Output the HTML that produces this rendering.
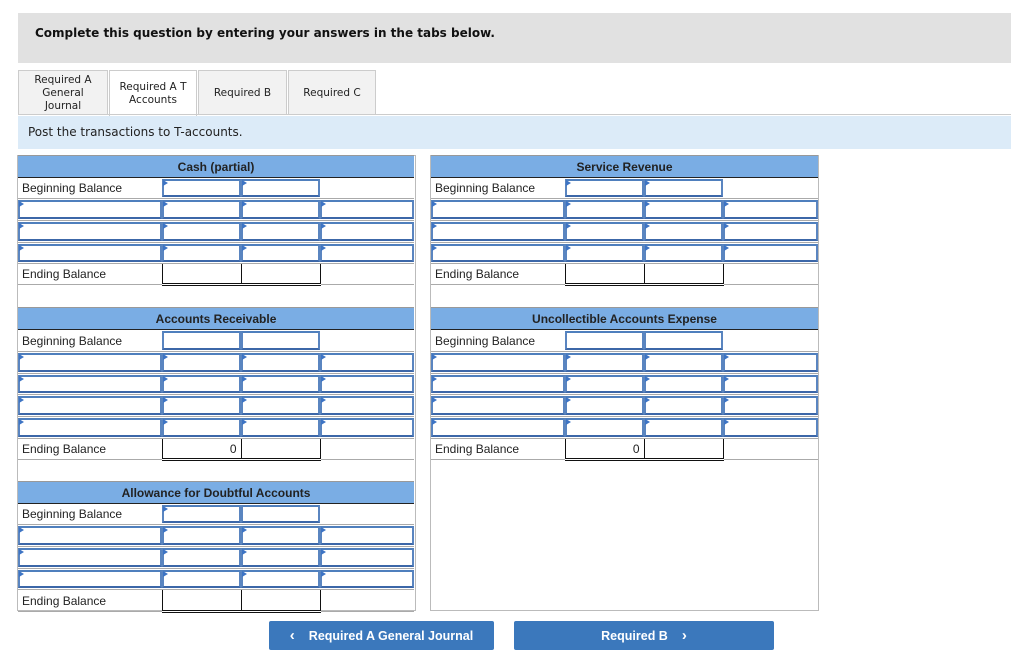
<!DOCTYPE html>
<html><head><meta charset="utf-8"><style>
*{box-sizing:border-box;margin:0;padding:0}
body{width:1024px;height:660px;background:#fff;position:relative;font-family:"Liberation Sans",Arial,sans-serif;overflow:hidden}
.top{position:absolute;left:18px;top:13px;width:993px;height:50px;background:#e1e1e1;font-family:"DejaVu Sans",sans-serif;font-weight:bold;font-size:12px;padding:13px 0 0 17px;color:#111}
.tab{position:absolute;top:70px;height:45px;border:1px solid #ccc;border-bottom:none;background:#f2f2f2;font-family:"DejaVu Sans",sans-serif;font-size:10.5px;color:#222;display:flex;align-items:center;justify-content:center;text-align:center;line-height:13px}
.tab.act{background:#fff;height:46px}
.line{position:absolute;left:18px;top:114px;width:993px;height:1px;background:#ccc}
.band{position:absolute;left:18px;top:116px;width:993px;height:33px;background:#dcebf8;font-family:"DejaVu Sans",sans-serif;font-size:12px;padding:9px 0 0 10px;color:#222}
.col{position:absolute;top:155px;height:456px;border:1px solid #bbb}
table{position:absolute;border-collapse:collapse;table-layout:fixed}
td{padding:0;position:relative;font-size:12px;color:#222;border-bottom:1px solid #aaa}
th{background:#7aade4;font-size:12px;font-weight:bold;color:#222;height:22px;border-bottom:1px solid #222;border-top:1px solid #999}
.i{position:absolute;left:0;top:1px;right:0;bottom:1px;border:2px solid #4f7fbd;border-color:#4f7fbd #5a85c0 #3c67a8 #5a85c0}
.i::before{content:"";position:absolute;left:-1px;top:-1px;border-left:5px solid #3d74c4;border-top:3px solid transparent;border-bottom:3px solid transparent}
.n::before{display:none}
td.l{padding-left:4px}
.e{border-left:1px solid #111;border-right:1px solid #111;border-bottom:3px double #111;text-align:right;padding-right:4px}
.btn{position:absolute;top:621px;height:29px;background:#3b78bc;color:#fff;font-weight:bold;font-size:12.5px;border-radius:2px;display:flex;align-items:center;justify-content:center}
</style></head><body>
<div class="top">Complete this question by entering your answers in the tabs below.</div>
<div class="tab" style="left:18px;width:90px">Required A<br>General<br>Journal</div>
<div class="tab act" style="left:109px;width:88px">Required A T<br>Accounts</div>
<div class="tab" style="left:198px;width:89px">Required B</div>
<div class="tab" style="left:288px;width:88px">Required C</div>
<div class="line"></div>
<div class="band">Post the transactions to T-accounts.</div>
<div class="col" style="left:17px;width:399px"></div>
<div class="col" style="left:430px;width:389px"></div>

<table style="left:18px;top:155px;width:396px"><colgroup><col width="144"><col width="79"><col width="79"><col width="94"></colgroup>
<tr><th colspan="4">Cash (partial)</th></tr>
<tr style="height:21px"><td class="l">Beginning Balance</td><td><div class="i"></div></td><td><div class="i"></div></td><td></td></tr>
<tr style="height:22px"><td><div class="i"></div></td><td><div class="i"></div></td><td><div class="i"></div></td><td><div class="i"></div></td></tr>
<tr style="height:22px"><td><div class="i"></div></td><td><div class="i"></div></td><td><div class="i"></div></td><td><div class="i"></div></td></tr>
<tr style="height:21px"><td><div class="i"></div></td><td><div class="i"></div></td><td><div class="i"></div></td><td><div class="i"></div></td></tr>
<tr style="height:21px"><td class="l">Ending Balance</td><td class="e"></td><td class="e"></td><td></td></tr>
</table>

<table style="left:431px;top:155px;width:387px"><colgroup><col width="134"><col width="79"><col width="79"><col width="95"></colgroup>
<tr><th colspan="4">Service Revenue</th></tr>
<tr style="height:21px"><td class="l">Beginning Balance</td><td><div class="i"></div></td><td><div class="i"></div></td><td></td></tr>
<tr style="height:22px"><td><div class="i"></div></td><td><div class="i"></div></td><td><div class="i"></div></td><td><div class="i"></div></td></tr>
<tr style="height:22px"><td><div class="i"></div></td><td><div class="i"></div></td><td><div class="i"></div></td><td><div class="i"></div></td></tr>
<tr style="height:21px"><td><div class="i"></div></td><td><div class="i"></div></td><td><div class="i"></div></td><td><div class="i"></div></td></tr>
<tr style="height:21px"><td class="l">Ending Balance</td><td class="e"></td><td class="e"></td><td></td></tr>
</table>

<table style="left:18px;top:307px;width:396px"><colgroup><col width="144"><col width="79"><col width="79"><col width="94"></colgroup>
<tr><th colspan="4">Accounts Receivable</th></tr>
<tr style="height:22px"><td class="l">Beginning Balance</td><td><div class="i n"></div></td><td><div class="i n"></div></td><td></td></tr>
<tr style="height:22px"><td><div class="i"></div></td><td><div class="i"></div></td><td><div class="i"></div></td><td><div class="i"></div></td></tr>
<tr style="height:21px"><td><div class="i"></div></td><td><div class="i"></div></td><td><div class="i"></div></td><td><div class="i"></div></td></tr>
<tr style="height:22px"><td><div class="i"></div></td><td><div class="i"></div></td><td><div class="i"></div></td><td><div class="i"></div></td></tr>
<tr style="height:22px"><td><div class="i"></div></td><td><div class="i"></div></td><td><div class="i"></div></td><td><div class="i"></div></td></tr>
<tr style="height:21px"><td class="l">Ending Balance</td><td class="e">0</td><td class="e"></td><td></td></tr>
</table>

<table style="left:431px;top:307px;width:387px"><colgroup><col width="134"><col width="79"><col width="79"><col width="95"></colgroup>
<tr><th colspan="4">Uncollectible Accounts Expense</th></tr>
<tr style="height:22px"><td class="l">Beginning Balance</td><td><div class="i n"></div></td><td><div class="i n"></div></td><td></td></tr>
<tr style="height:22px"><td><div class="i"></div></td><td><div class="i"></div></td><td><div class="i"></div></td><td><div class="i"></div></td></tr>
<tr style="height:21px"><td><div class="i"></div></td><td><div class="i"></div></td><td><div class="i"></div></td><td><div class="i"></div></td></tr>
<tr style="height:22px"><td><div class="i"></div></td><td><div class="i"></div></td><td><div class="i"></div></td><td><div class="i"></div></td></tr>
<tr style="height:22px"><td><div class="i"></div></td><td><div class="i"></div></td><td><div class="i"></div></td><td><div class="i"></div></td></tr>
<tr style="height:21px"><td class="l">Ending Balance</td><td class="e">0</td><td class="e"></td><td></td></tr>
</table>

<table style="left:18px;top:481px;width:396px"><colgroup><col width="144"><col width="79"><col width="79"><col width="94"></colgroup>
<tr><th colspan="4">Allowance for Doubtful Accounts</th></tr>
<tr style="height:21px"><td class="l">Beginning Balance</td><td><div class="i"></div></td><td><div class="i n"></div></td><td></td></tr>
<tr style="height:22px"><td><div class="i"></div></td><td><div class="i"></div></td><td><div class="i"></div></td><td><div class="i"></div></td></tr>
<tr style="height:22px"><td><div class="i"></div></td><td><div class="i"></div></td><td><div class="i"></div></td><td><div class="i"></div></td></tr>
<tr style="height:21px"><td><div class="i"></div></td><td><div class="i"></div></td><td><div class="i"></div></td><td><div class="i"></div></td></tr>
<tr style="height:22px"><td class="l">Ending Balance</td><td class="e"></td><td class="e"></td><td></td></tr>
</table>

<div class="btn" style="left:269px;width:225px"><span style="font-size:15px;margin-right:14px">&#8249;</span>Required A General Journal</div>
<div class="btn" style="left:514px;width:260px">Required B<span style="font-size:15px;margin-left:14px">&#8250;</span></div>
</body></html>
